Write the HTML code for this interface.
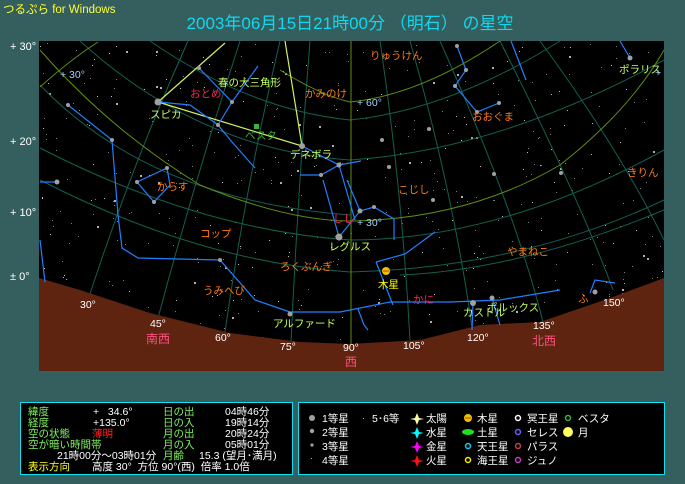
<!DOCTYPE html>
<html><head><meta charset="utf-8">
<style>
html,body{margin:0;padding:0;width:685px;height:484px;overflow:hidden;background:#355f5f;}
svg{display:block}
text{font-family:"Liberation Sans","Noto Sans CJK JP",sans-serif;}
</style></head><body>
<svg id="s" width="685" height="484" viewBox="0 0 685 484" xmlns="http://www.w3.org/2000/svg">
<rect width="685" height="484" fill="#355f5f"/>
<text x="3" y="13" font-size="11.5" fill="#ffff30">つるぷら for Windows</text>
<text x="350" y="29" font-size="17" fill="#10d8f0" text-anchor="middle">2003年06月15日21時00分 （明石） の星空</text>
<g font-size="11" fill="#ffffff">
<text x="10" y="50">+ 30°</text><text x="10" y="145">+ 20°</text><text x="10" y="216">+ 10°</text><text x="10" y="280">± 0°</text>
</g>
<rect x="39" y="41" width="625" height="330" fill="#000"/>
<g id="stars"></g>
<g fill="none" stroke="#136050" stroke-width="1">
<path d="M88,300 Q130,170 188,41"/>
<path d="M158,318 Q195,180 240,41"/>
<path d="M225,332 Q245,190 280,41"/>
<path d="M291,342 Q298,190 310,41"/>
<path d="M410,340 Q402,190 380,41"/>
<path d="M473,335 Q455,200 410,41"/>
<path d="M543,322 Q515,210 440,41"/>
<path d="M613,290 Q580,200 500,41"/>
<path d="M664,240 Q620,150 540,41"/>
<path d="M40,148 Q200,230 350,240 Q500,240 664,150"/>
<path d="M40,180 Q200,262 350,272 Q520,268 664,200"/>
<path d="M80,41 Q200,150 350,160 Q500,150 664,60"/>
<path d="M150,41 Q250,110 350,120 Q450,110 560,41"/>
<path d="M40,85 Q150,200 350,215"/>
<path d="M400,275 Q520,270 664,210"/>
</g>
<g fill="none" stroke="#5e9010" stroke-width="1">
<path d="M40,50 Q110,130 200,185 Q290,222 355,221 Q470,218 560,165 Q630,110 664,50"/>
<path d="M280,70 Q320,95 350,102 Q420,95 500,41"/>
<path d="M40,87 Q70,60 98,42"/>
<path d="M351,41 L351,371"/>
</g>
<path d="M39,278 L80,290 L150,313 L230,333 L300,342 L350,344 L420,340 L480,325 L540,322 L613,297 L664,278 L664,371 L39,371 Z" fill="#5e2410"/>
<g fill="none" stroke="#d0f060" stroke-width="1.2">
<path d="M158,102 L302,146 L285,41"/><path d="M158,102 L225,43"/>
</g>
<g fill="none" stroke="#2080ff" stroke-width="1.2">
<path d="M158,102 L190,105 L218,125 L232,142 L255,168"/>
<path d="M199,68 L232,102 L218,125"/><path d="M232,102 L258,66"/>
<path d="M302,146 L339,165 L361,161"/><path d="M300,175 L321,175 L339,165"/><path d="M339,165 L355,220"/>
<path d="M68,105 L112,140 L118,215 L122,248 L138,258 L220,260 L255,300 L290,312 L340,312 L390,302 L450,302 L500,300 L560,290"/>
<path d="M40,182 L57,182"/>
<path d="M137,182 L167,168 L170,185 L154,202 Z"/>
<path d="M323,180 L339,237 L360,211 L374,207 L394,219 L394,240"/><path d="M360,211 L347,180"/>
<path d="M457,46 L466,70 L455,86 L477,112 L499,103"/>
<path d="M511,41 L526,80"/><path d="M620,41 L630,58"/>
<path d="M376,262 L405,254 L435,232"/><path d="M376,262 L393,305"/>
<path d="M358,309 L364,325 L368,330"/>
<path d="M473,303 L472,330"/><path d="M492,298 L500,325"/>
<path d="M590,293 L595,280 L615,283"/>
<path d="M40,240 L45,282"/>
</g>
<g fill="#a0a0a0">
<circle cx="158" cy="102" r="3.5"/><circle cx="302" cy="146" r="3"/><circle cx="339" cy="237" r="3.5"/>
<circle cx="290" cy="314" r="2.5"/><circle cx="473" cy="303" r="3"/><circle cx="492" cy="298" r="2.5"/>
<circle cx="630" cy="58" r="2.5"/><circle cx="457" cy="46" r="2"/><circle cx="466" cy="70" r="2"/>
<circle cx="455" cy="86" r="2"/><circle cx="477" cy="112" r="2"/><circle cx="499" cy="103" r="2"/>
<circle cx="199" cy="68" r="2"/><circle cx="232" cy="102" r="2"/><circle cx="218" cy="125" r="2"/>
<circle cx="112" cy="140" r="2"/><circle cx="57" cy="182" r="2.5"/><circle cx="137" cy="182" r="2"/>
<circle cx="167" cy="168" r="2"/><circle cx="154" cy="202" r="2"/><circle cx="360" cy="211" r="2.5"/>
<circle cx="374" cy="207" r="2"/><circle cx="429" cy="129" r="2"/><circle cx="382" cy="140" r="2"/>
<circle cx="389" cy="167" r="2"/><circle cx="494" cy="174" r="2"/><circle cx="561" cy="173" r="2"/>
<circle cx="220" cy="260" r="2"/><circle cx="321" cy="175" r="2"/><circle cx="339" cy="165" r="2.5"/>
<circle cx="595" cy="292" r="2.5"/><circle cx="68" cy="105" r="2"/><circle cx="433" cy="200" r="2"/>
</g>
<rect x="254" y="124" width="5" height="5" fill="#40b040"/>
<circle cx="386" cy="271" r="4" fill="#f0c000"/><line x1="383" y1="271" x2="389" y2="271" stroke="#c04000"/>
<g font-size="10.5">
<g fill="#ff7a10">
<text x="305" y="97">かみのけ</text><text x="370" y="59">りゅうけん</text><text x="472" y="120">おおぐま</text>
<text x="398" y="193">こじし</text><text x="627" y="176">きりん</text><text x="157" y="190">からす</text>
<text x="200" y="237">コップ</text><text x="280" y="270">ろくぶんぎ</text><text x="203" y="294">うみへび</text>
<text x="507" y="255">やまねこ</text><text x="578" y="302">ふ</text>
</g>
<g fill="#ff2060"><text x="190" y="97">おとめ</text><text x="333" y="222">しし</text><text x="413" y="303">かに</text></g>
<g fill="#c8ff60">
<text x="218" y="86">春の大三角形</text><text x="150" y="118">スピカ</text><text x="290" y="158">デネボラ</text>
<text x="329" y="250">レグルス</text><text x="273" y="327">アルファード</text><text x="463" y="316">カストル</text>
<text x="487" y="311">ポルックス</text><text x="619" y="73">ポラリス</text>
</g>
<text x="245" y="139" fill="#40b040">ベスタ</text>
<text x="378" y="288" fill="#ffff00">木星</text>
<g fill="#a0d0ff"><text x="60" y="78">+ 30°</text><text x="357" y="106">+ 60°</text><text x="357" y="226">+ 30°</text><text x="655" y="76">+</text></g>
<g fill="#ffffff"><text x="80" y="308">30°</text><text x="150" y="327">45°</text><text x="215" y="341">60°</text><text x="280" y="350">75°</text>
<text x="343" y="351">90°</text><text x="403" y="349">105°</text><text x="467" y="341">120°</text><text x="533" y="329">135°</text><text x="603" y="306">150°</text></g>
<g fill="#ff5080" font-size="12"><text x="146" y="343">南西</text><text x="345" y="366">西</text><text x="532" y="345">北西</text></g>
</g>
<rect x="20.5" y="402.5" width="272" height="72" fill="#000" stroke="#10e0f0"/>
<g font-size="10.5">
<g fill="#80f060">
<text x="28" y="415">緯度</text><text x="28" y="426">経度</text><text x="28" y="437">空の状態</text><text x="28" y="448">空が暗い時間帯</text>
<text x="163" y="415">日の出</text><text x="163" y="426">日の入</text><text x="163" y="437">月の出</text><text x="163" y="448">月の入</text><text x="163" y="459">月齢</text>
</g>
<g fill="#ffffff">
<text x="93" y="415">+&#160;&#160;&#160;34.6°</text><text x="93" y="426">+135.0°</text>
<text x="225" y="415">04時46分</text><text x="225" y="426">19時14分</text><text x="225" y="437">20時24分</text><text x="225" y="448">05時01分</text>
<text x="57" y="459">21時00分～03時01分</text><text x="199" y="459">15.3 (望月･満月)</text>
<text x="92" y="470">高度 30°&#160;&#160;方位 90°(西)&#160;&#160;倍率 1.0倍</text>
</g>
<text x="92" y="437" fill="#ff2020">薄明</text>
<text x="28" y="470" fill="#ffff20">表示方向</text>
</g>
<rect x="298.5" y="402.5" width="366" height="72" fill="#000" stroke="#10e0f0"/>
<g font-size="10.5" fill="#ffffff">
<circle cx="312" cy="418" r="3" fill="#a0a0a0"/><text x="322" y="422">1等星</text>
<circle cx="312" cy="431" r="2.2" fill="#a0a0a0"/><text x="322" y="436">2等星</text>
<circle cx="312" cy="445" r="1.6" fill="#a0a0a0"/><text x="322" y="450">3等星</text>
<rect x="311" y="458" width="1" height="1" fill="#aaa"/><text x="322" y="464">4等星</text>
<rect x="363" y="418" width="1" height="1" fill="#aaa"/><text x="372" y="422">5･6等</text>
<path d="M417,413 L419,418 L424,419 L419,420 L417,425 L415,420 L410,419 L415,418Z" fill="#ffffa0"/><text x="426" y="422">太陽</text>
<path d="M417,427 L419,432 L424,433 L419,434 L417,439 L415,434 L410,433 L415,432Z" fill="#00ffff"/><text x="426" y="436">水星</text>
<path d="M417,441 L419,446 L424,447 L419,448 L417,453 L415,448 L410,447 L415,446Z" fill="#ff00ff"/><text x="426" y="450">金星</text>
<path d="M417,455 L419,460 L424,461 L419,462 L417,467 L415,462 L410,461 L415,460Z" fill="#ff1010"/><text x="426" y="464">火星</text>
<circle cx="468" cy="418" r="4" fill="#f0c000"/><line x1="465" y1="418" x2="471" y2="418" stroke="#c04000"/><text x="477" y="422">木星</text>
<ellipse cx="468" cy="432" rx="6" ry="3" fill="#20e020"/><text x="477" y="436">土星</text>
<circle cx="468" cy="446" r="2.5" fill="none" stroke="#10d0f0" stroke-width="1.5"/><text x="477" y="450">天王星</text>
<circle cx="468" cy="460" r="2.5" fill="none" stroke="#f0f000" stroke-width="1.5"/><text x="477" y="464">海王星</text>
<circle cx="518" cy="418" r="2.5" fill="none" stroke="#fff" stroke-width="1.5"/><text x="527" y="422">冥王星</text>
<circle cx="518" cy="432" r="2.5" fill="none" stroke="#6060ff" stroke-width="1.5"/><text x="527" y="436">セレス</text>
<circle cx="518" cy="446" r="2.5" fill="none" stroke="#c04050" stroke-width="1.5"/><text x="527" y="450">パラス</text>
<circle cx="518" cy="460" r="2.5" fill="none" stroke="#c040c0" stroke-width="1.5"/><text x="527" y="464">ジュノ</text>
<circle cx="568" cy="418" r="2.5" fill="none" stroke="#40b040" stroke-width="1.5"/><text x="578" y="422">ベスタ</text>
<circle cx="568" cy="432" r="5" fill="#ffff60"/><text x="578" y="436">月</text>
</g>
</svg>
<script>
(function(){var g=document.getElementById('stars'),s=12345,h='';
function r(){s=(s*1103515245+12345)%2147483648;return s/2147483648;}
for(var i=0;i<420;i++){var x=40+r()*623,y=42+r()*300;var c=r()<0.3?'#c0c0c0':'#808080';h+='<rect x="'+x.toFixed(0)+'" y="'+y.toFixed(0)+'" width="1" height="1" fill="'+c+'"/>';}
for(var j=0;j<40;j++){var x2=40+r()*623,y2=42+r()*290;h+='<rect x="'+x2.toFixed(0)+'" y="'+y2.toFixed(0)+'" width="2" height="2" fill="#b0b0b0"/>';}
g.innerHTML=h;})();
</script>
</body></html>
